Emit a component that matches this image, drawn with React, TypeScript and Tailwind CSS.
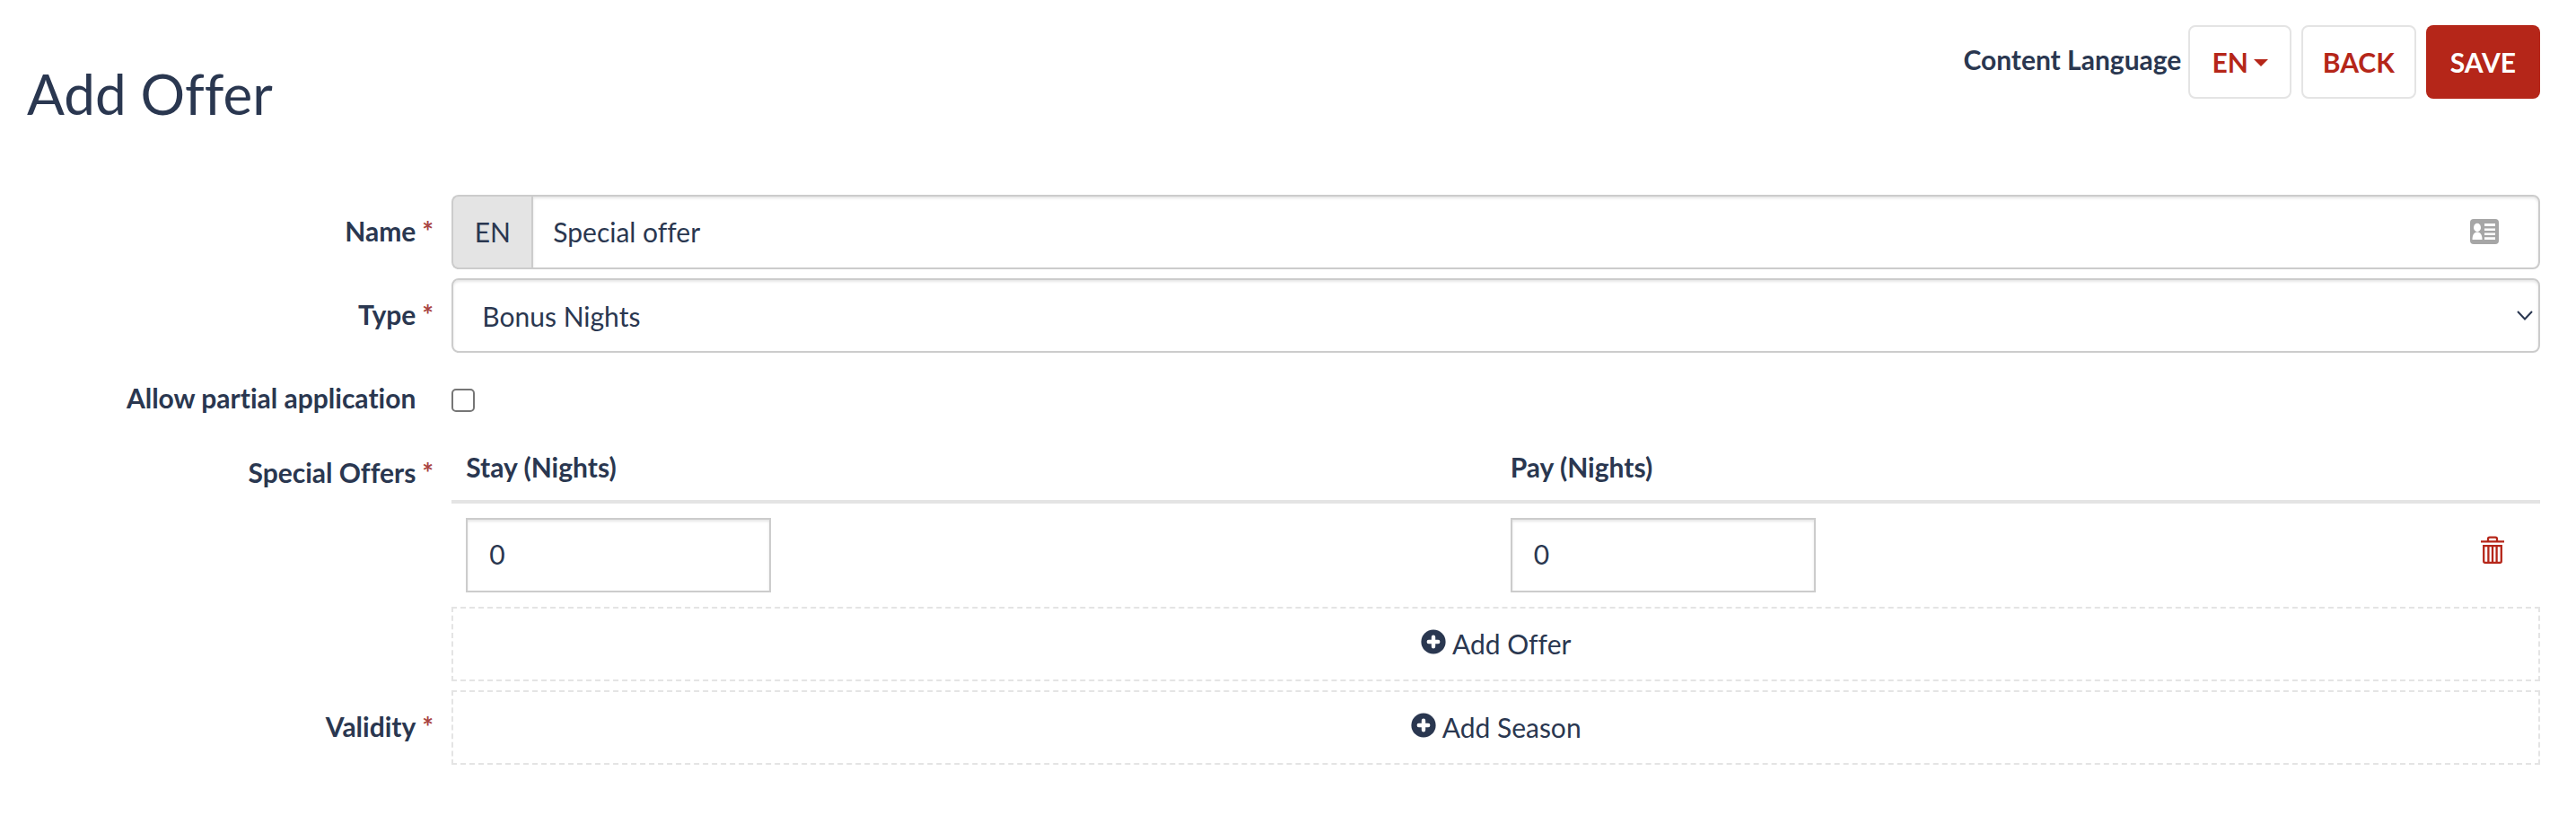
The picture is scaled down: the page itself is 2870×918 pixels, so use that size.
import { useState, type ReactNode } from "react"

type FormRowProps = {
  label: string
  htmlFor?: string
  required?: boolean
  labelClass?: string
  children: ReactNode
}

const inputClass =
  "h-[83px] border-2 border-[#cccccc] bg-white text-[30px] shadow-[inset_0_2px_3px_rgba(0,0,0,0.1)] outline-none"

const addClass =
  "flex h-[83px] w-full items-center justify-center gap-[7px] border-2 border-dashed border-[#e4e4e4] pb-0.5"

function FormRow({ label, htmlFor, required, labelClass = "pt-5", children }: FormRowProps) {
  return (
    <div className="grid grid-cols-[1fr_5fr] gap-2">
      <label htmlFor={htmlFor} className={`flex justify-end font-bold ${labelClass}`}>
        {label}
        <span className="w-8 pl-[7px] text-[#a94442]">{required ? "*" : ""}</span>
      </label>
      <div className="min-w-0">{children}</div>
    </div>
  )
}

function PlusCircle() {
  return (
    <svg viewBox="0 0 28 28" className="-mt-1 h-7 w-7" aria-hidden="true">
      <circle cx="14" cy="14" r="13.6" fill="#2a3750" />
      <path d="M14 8.8v10.4M8.8 14h10.4" stroke="#fff" strokeWidth="4.4" strokeLinecap="round" />
    </svg>
  )
}

function Trash() {
  return (
    <svg viewBox="0 0 26 32" className="h-8 w-[26px]" fill="none" stroke="#b52619" strokeWidth="2.3" aria-hidden="true">
      <path d="M0 6.4h26M8 6V3.4Q8 1.6 9.8 1.6h6.4Q18 1.6 18 3.4V6" />
      <path d="M3.2 11.2h19.6v17q0 1.6-1.6 1.6H4.8q-1.6 0-1.6-1.6zM8.4 11v19M13 11v19M17.6 11v19" />
    </svg>
  )
}

function ContactCard() {
  return (
    <svg viewBox="0 0 32 28" className="h-7 w-8" aria-hidden="true">
      <rect width="32" height="28" rx="4" fill="#a6a6a6" />
      <g fill="#fff">
        <ellipse cx="8" cy="9.5" rx="4" ry="4.7" />
        <path d="M2.5 23c0-5 1.6-8.6 5.5-8.6s5.5 3.6 5.5 8.6z" />
        <path d="M16 5h12v3H16zM16 10.5h12V13H16zM16 15.5h12V18H16zM16 20.2h12V23H16z" />
      </g>
    </svg>
  )
}

export default function App() {
  const [name, setName] = useState("Special offer")
  const [partial, setPartial] = useState(false)
  const [stay, setStay] = useState("0")
  const [pay, setPay] = useState("0")

  return (
    <main className="min-h-screen bg-white pr-10 pl-[30px] font-['Lato','Open_Sans',sans-serif] text-[30px] leading-10 text-[#2a3750] [font-variant-ligatures:none]">
      <header className="flex items-start justify-between pt-7">
        <h1 className="pt-10 text-[62px] leading-[72px]">Add Offer</h1>
        <div className="flex items-center gap-[11px] font-bold">
          <div className="flex items-center gap-2">
            <span className="pb-1.5">Content Language</span>
            <button type="button" className="flex h-[82px] items-center gap-1.5 rounded-lg border-2 border-[#e4e4e4] px-6 text-[#b52619]">
              EN
              <svg viewBox="0 0 16 8" className="mt-0.5 h-2 w-4" aria-hidden="true">
                <path d="M0 0h16L8 8z" fill="currentColor" />
              </svg>
            </button>
          </div>
          <button type="button" className="h-[82px] rounded-lg border-2 border-[#e4e4e4] px-[22px] text-[#b52619]">
            BACK
          </button>
          <button type="submit" className="h-[82px] rounded-lg bg-[#b52619] px-[27px] text-white">
            SAVE
          </button>
        </div>
      </header>

      <form className="mt-[77px] flex flex-col gap-2.5">
        <FormRow label="Name" htmlFor="name" required>
          <div className="relative flex">
            <span className="flex h-[83px] w-[89px] items-center justify-center rounded-l-lg border-2 border-r-0 border-[#cccccc] bg-[#e4e4e4] pb-0.5">
              EN
            </span>
            <input
              id="name"
              value={name}
              onChange={(e) => setName(e.target.value)}
              className={`${inputClass} min-w-0 flex-1 rounded-r-lg pb-0.5 pl-[22px]`}
            />
            <span className="absolute top-[27px] right-[46px]">
              <ContactCard />
            </span>
          </div>
        </FormRow>

        <FormRow label="Type" htmlFor="type" required>
          <div className="relative">
            <select id="type" className={`${inputClass} w-full appearance-none rounded-lg px-8`}>
              <option>Bonus Nights</option>
            </select>
            <svg viewBox="0 0 18 12" className="pointer-events-none absolute top-[36px] right-2 h-3 w-[18px]" aria-hidden="true">
              <path d="M1 1l8 8.5L17 1" fill="none" stroke="#2a3750" strokeWidth="2" />
            </svg>
          </div>
        </FormRow>

        <FormRow label="Allow partial application" htmlFor="partial">
          <div className="flex h-[83px] items-center pt-0.5">
            <input
              id="partial"
              type="checkbox"
              checked={partial}
              onChange={(e) => setPartial(e.target.checked)}
              className="h-[26px] w-[26px] appearance-none rounded-[5px] border-2 border-[#767676] checked:bg-[#2a3750]"
            />
          </div>
        </FormRow>

        <FormRow label="Special Offers" required labelClass="pt-2.5">
          <table className="w-full table-fixed border-separate border-spacing-0 text-left">
            <thead>
              <tr>
                <th className="w-1/2 border-b-4 border-[#e4e4e4] px-4 pt-1 pb-[17px]">Stay (Nights)</th>
                <th className="border-b-4 border-[#e4e4e4] px-4 pt-1 pb-[17px]">Pay (Nights)</th>
                <th className="w-[106px] border-b-4 border-[#e4e4e4]" />
              </tr>
            </thead>
            <tbody>
              <tr>
                <td className="px-4 py-4">
                  <input
                    aria-label="Stay (Nights)"
                    value={stay}
                    onChange={(e) => setStay(e.target.value)}
                    className={`${inputClass} block w-[340px] px-6 pb-1`}
                  />
                </td>
                <td className="px-4 py-4">
                  <input
                    aria-label="Pay (Nights)"
                    value={pay}
                    onChange={(e) => setPay(e.target.value)}
                    className={`${inputClass} block w-[340px] px-6 pb-1`}
                  />
                </td>
                <td className="pb-3">
                  <button type="button" aria-label="Delete" className="mx-auto block">
                    <Trash />
                  </button>
                </td>
              </tr>
            </tbody>
          </table>
          <button type="button" className={addClass}>
            <PlusCircle />
            Add Offer
          </button>
        </FormRow>

        <FormRow label="Validity" required>
          <button type="button" className={addClass}>
            <PlusCircle />
            Add Season
          </button>
        </FormRow>
      </form>
    </main>
  )
}
